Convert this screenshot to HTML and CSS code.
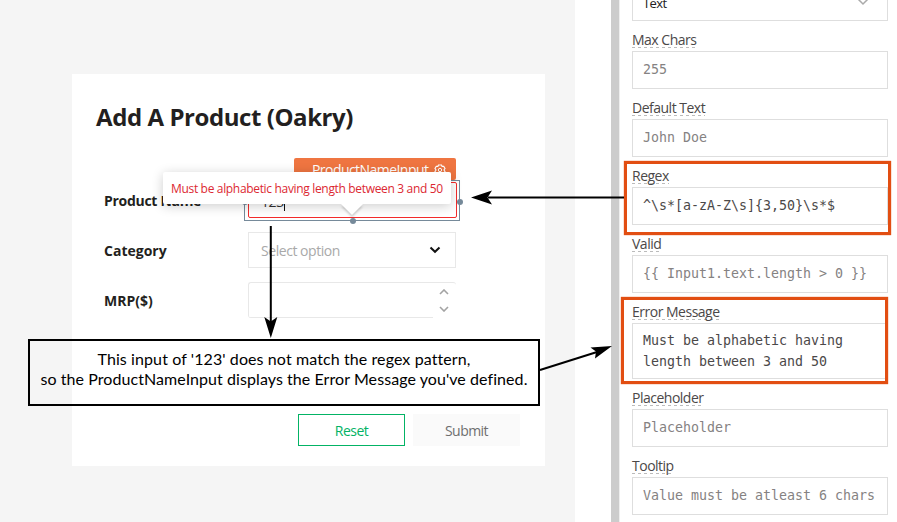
FILE: index.html
```html
<!DOCTYPE html>
<html lang="en">
<head>
<meta charset="utf-8">
<title>Add A Product</title>
<link rel="stylesheet" href="styles.css">
</head>
<body>
<main class="app">
  <section class="canvas">
    <form class="card">
      <h1><span>Add A Product (Oakry)</span></h1>
      <div class="row">
        <label><span class="l-name">Product Name</span></label>
        <div class="control invalid">123<i class="caret"></i>
          <div class="selection"><b class="dot left"></b><b class="dot right"></b><b class="dot bottom"></b></div>
          <div class="tag"><span>ProductNameInput</span>
            <svg width="12" height="12" viewBox="0 0 12 12" fill="none" stroke="#fff"><path stroke-width="1.2" d="M4.500 1h3l.6 1.400 1.600-.1 1.300 2.200-1 1.500 1 1.500-1.300 2.200-1.600-.1-.6 1.400h-3l-.6-1.400-1.600.1L1 7.500l1-1.500-1-1.500 1.300-2.200 1.600.1z"/><circle cx="6" cy="6" r="1.700"/></svg>
          </div>
          <div class="error-tip"><span>Must be alphabetic having length between 3 and 50</span></div>
        </div>
      </div>
      <div class="row">
        <label><span class="l-cat">Category</span></label>
        <div class="control select"><span>Select option</span>
          <svg width="12" height="8" viewBox="0 0 12 8" fill="none" stroke="#111" stroke-width="2"><path d="M1.500 1.500L6 5.800l4.500-4.300"/></svg>
        </div>
      </div>
      <div class="row">
        <label><span class="l-mrp">MRP($)</span></label>
        <div class="control number">
          <div class="stepper">
            <svg width="10" height="6" viewBox="0 0 10 6" fill="none" stroke="#a3a3a3" stroke-width="1.600"><path d="M1 5l4-4 4 4"/></svg>
            <svg width="10" height="6" viewBox="0 0 10 6" fill="none" stroke="#a3a3a3" stroke-width="1.600"><path d="M1 1l4 4 4-4"/></svg>
          </div>
        </div>
      </div>
      <div class="actions">
        <button type="button" class="reset">Reset</button>
        <button type="button" class="submit">Submit</button>
      </div>
    </form>
  </section>
  <div class="divider"></div>
  <aside class="panel">
    <div class="field first"><div class="box type"><span>Text</span>
      <svg width="12" height="8" viewBox="0 0 12 8" fill="none" stroke="#aaa" stroke-width="1.500"><path d="M1 1l5 5 5-5"/></svg></div></div>
    <div class="field"><label>Max Chars</label><div class="box">255</div></div>
    <div class="field"><label>Default Text</label><div class="box">John Doe</div></div>
    <div class="field"><label>Regex</label><div class="box filled">^\s*[a-zA-Z\s]{3,50}\s*$</div></div>
    <div class="field"><label>Valid</label><div class="box">{{ Input1.text.length &gt; 0 }}</div></div>
    <div class="field"><label>Error Message</label><div class="box filled tall">Must be alphabetic having<br>length between 3 and 50</div></div>
    <div class="field"><label>Placeholder</label><div class="box">Placeholder</div></div>
    <div class="field"><label>Tooltip</label><div class="box">Value must be atleast 6 chars</div></div>
  </aside>
</main>
<div class="highlight regex"></div>
<div class="highlight message"></div>
<div class="note"><p class="n1">This input of '123' does not match the regex pattern,</p><p class="n2">so the ProductNameInput displays the Error Message you've defined.</p></div>
<svg class="arrows" width="897" height="522" viewBox="0 0 897 522">
  <g fill="none" stroke="#000" stroke-width="2"><path d="M270.800 226V322M624 197.600L488 197.600M540 370L597 352"/></g>
  <path d="M270.800 338l-6.500-21 6.500 4.500 6.500-4.500zM471 197.500l21-7-4.500 7 4.500 7zM612 346l-21.500 1.500 5.500 4-1 7z"/>
</svg>
</body>
</html>
```
FILE: styles.css
```css
* { box-sizing: border-box; }
body { margin: 0; width: 897px; height: 522px; overflow: hidden; position: relative; background: #fff; font-family: "Open Sans", sans-serif; }
.app { display: flex; height: 522px; }
.canvas { width: 575px; background: #f5f5f5; padding: 74px 30px 56px 72px; }
.card { width: 473px; height: 392px; background: #fff; padding: 25px 25px 0 24px; }
h1 { margin: 0; font-size: 24px; line-height: 35px; height: 83px; font-weight: 700; color: #231f20; letter-spacing: -.43px; white-space: nowrap; }
.row { display: flex; height: 36px; margin-bottom: 14px; padding-left: 8px; }
.row label { width: 144px; line-height: 38px; font-size: 14px; font-weight: 700; color: #231f20; white-space: nowrap; }
.l-name { letter-spacing: -.3px; }
.control { position: relative; width: 208px; height: 36px; border: 1px solid #e8e8e8; padding-left: 12px; font-size: 14px; line-height: 36px; color: #333; }
.invalid { width: 209px; border-color: #f22b2b; border-radius: 2px; line-height: 37px; letter-spacing: -.4px; }
.caret { display: inline-block; width: 1px; height: 16px; background: #111; vertical-align: -4px; }
.selection { position: absolute; left: -5px; top: -3px; width: 216px; height: 41px; border: 1px solid #768a9a; }
.dot { position: absolute; width: 6px; height: 6px; border-radius: 50%; background: #768a9a; }
.left { left: -3px; top: 18px; }
.right { right: -4px; top: 18px; }
.bottom { left: 105px; bottom: -4px; }
.tag { position: absolute; left: 45px; top: -25px; width: 162px; height: 22px; background: #ef7541; color: #fff; border-radius: 2px; display: flex; align-items: center; padding-left: 18px; line-height: 24px; font-size: 14px; letter-spacing: -.55px; white-space: nowrap; }
.tag span { width: 122px; padding-top: 1px; }
.tag svg { margin-top: 1px; }
.error-tip { position: absolute; left: -86px; top: -11px; width: 288px; height: 32px; background: #fff; border-radius: 2px; box-shadow: 0 2px 12px #0003; color: #dc2832; padding-left: 8px; font-size: 12px; line-height: 34px; letter-spacing: -.33px; white-space: nowrap; }
.error-tip::after { content: ""; position: absolute; left: 178px; top: 32px; border: 11px solid transparent; border-top-color: #fff; border-bottom: 0; filter: drop-shadow(0 2px 1px #0003); }
.select { display: flex; justify-content: space-between; align-items: center; color: #a9a9a9; padding-right: 14px; }
.select span { letter-spacing: -.45px; line-height: 38px; margin-top: 2px; }
.number { border-right: 0; border-bottom: 0; border-radius: 3px; background: linear-gradient(#e8e8e8, #e8e8e8) 0 100% / 184px 1px no-repeat; }
.stepper { height: 100%; display: flex; flex-direction: column; align-items: flex-end; padding: 6px 7px 0 0; gap: 11px; }
.actions { display: flex; gap: 8px; padding: 82px 0 0 202px; }
.actions button { width: 107px; height: 32px; padding: 1px 0 0; border: 0; font: 14px "Open Sans", sans-serif; letter-spacing: -.55px; }
.actions .reset { border: 1px solid #03b365; background: #fff; color: #03b365; padding: 1px 0 0; }
.actions .submit { background: #fafafa; color: #6f6f6f; }
.divider { width: 9px; margin-left: 36px; background: #ccc; border-right: 1px solid #eee; }
.panel { padding-left: 12px; width: 268px; }
.field { height: 68px; padding-top: 10px; }
.field:has(.tall) { height: 86px; }
.first { height: 21px; padding: 0; }
.field label { display: block; width: max-content; height: 17px; font-size: 14px; line-height: 18px; letter-spacing: -.5px; color: #4b4848; white-space: nowrap; background: repeating-linear-gradient(90deg, #bbb 0 3px, transparent 3px 6px) 0 100% / 100% 1px no-repeat; margin-bottom: 3px; }
.box { width: 256px; height: 38px; border: 1px solid #dedede; padding: 0 10px; font: 13.290px/35px "DejaVu Sans Mono", monospace; color: #858282; white-space: pre; }
.filled { color: #4b4848; }
.tall { height: 56px; line-height: 21px; padding-top: 6px; }
.type { height: 21px; border-top: 0; display: flex; justify-content: space-between; align-items: flex-start; padding-right: 18px; color: #222; font: 13px/20px "Open Sans", sans-serif; letter-spacing: -.6px; }
.type span { margin-top: -7px; }
.type svg { margin-top: -2px; }
.highlight { position: absolute; border: 3px solid #e24e12; box-shadow: 0 0 1px #e24e12; }
.regex { left: 624px; top: 161px; width: 267px; height: 74px; }
.message { left: 621px; top: 297px; width: 267px; height: 87px; }
.note { position: absolute; left: 28px; top: 339px; width: 512px; height: 67px; border: 2px solid #000; padding-top: 8px; font: 16px/20px Lato, sans-serif; color: #000; text-align: center; white-space: nowrap; }
.note p { margin: 0; }
.n1 { letter-spacing: .1px; }
.n2 { letter-spacing: .07px; }
.arrows { position: absolute; left: 0; top: 0; }
```
